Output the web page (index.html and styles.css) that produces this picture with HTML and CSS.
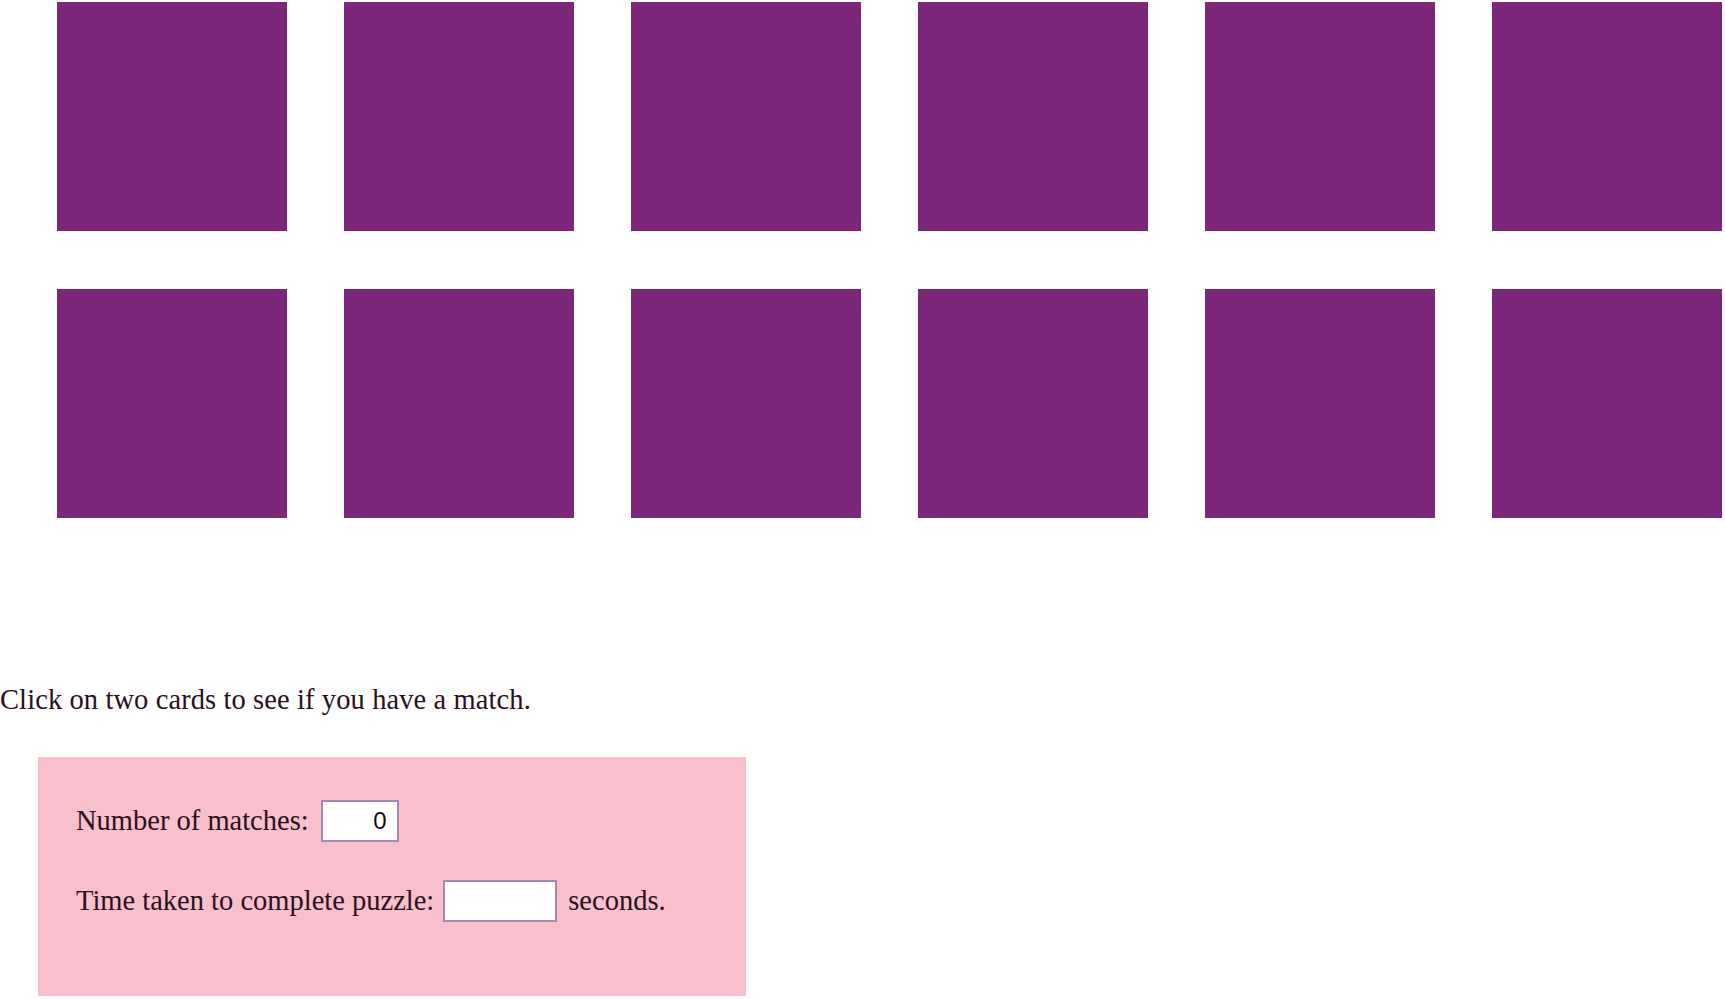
FILE: index.html
```html
<!DOCTYPE html>
<html>
<head>
<meta charset="utf-8">
<title>Memory</title>
<link rel="stylesheet" href="styles.css">
</head>
<body>
<div class="board">
  <div class="card"></div><div class="card"></div><div class="card"></div>
  <div class="card"></div><div class="card"></div><div class="card"></div>
  <div class="card"></div><div class="card"></div><div class="card"></div>
  <div class="card"></div><div class="card"></div><div class="card"></div>
</div>
<p class="hint">Click on two cards to see if you have a match.</p>
<form class="panel">
  <div class="row">
    <label class="label label-matches" for="matches">Number of matches:</label>
    <input class="field field-matches" id="matches" type="text" value="0">
  </div>
  <div class="row">
    <label class="label" for="time">Time taken to complete puzzle:</label>
    <input class="field field-time" id="time" type="text" value="">
    <span class="unit">seconds.</span>
  </div>
</form>
</body>
</html>
```
FILE: styles.css
```css
html, body {
  margin: 0;
  padding: 0;
  background: #ffffff;
}
body {
  font-family: "Liberation Serif", "Times New Roman", serif;
  font-size: 28.5px;
  color: #2a1020;
  overflow: hidden;
}
.board {
  display: grid;
  grid-template-columns: repeat(6, 230px);
  grid-auto-rows: 229px;
  column-gap: 57px;
  row-gap: 58px;
  padding: 2px 0 0 57px;
}
.card {
  background: #7b2679;
}
.hint {
  margin: 162px 0 0 0;
  line-height: 40px;
  height: 40px;
  letter-spacing: 0.1px;
}
.panel {
  margin: 37px 0 0 38px;
  width: 708px;
  height: 239px;
  background: #f8c0cc;
  box-sizing: border-box;
  padding: 43px 0 0 38px;
  display: flex;
  flex-direction: column;
  gap: 38px;
}
.row {
  display: flex;
  align-items: center;
  height: 42px;
}
.label {
  margin-right: 9px;
}
.label-matches {
  margin-right: 12px;
}
.field {
  box-sizing: border-box;
  height: 42px;
  border: 2px solid #a888b0;
  background: #ffffff;
  font-family: "Liberation Sans", Arial, sans-serif;
  font-size: 24px;
  color: #1a0a14;
  padding: 0 10px;
  margin: 0;
}
.field-matches {
  width: 78px;
  text-align: right;
}
.field-time {
  width: 114px;
}
.unit {
  margin-left: 11px;
}
```
